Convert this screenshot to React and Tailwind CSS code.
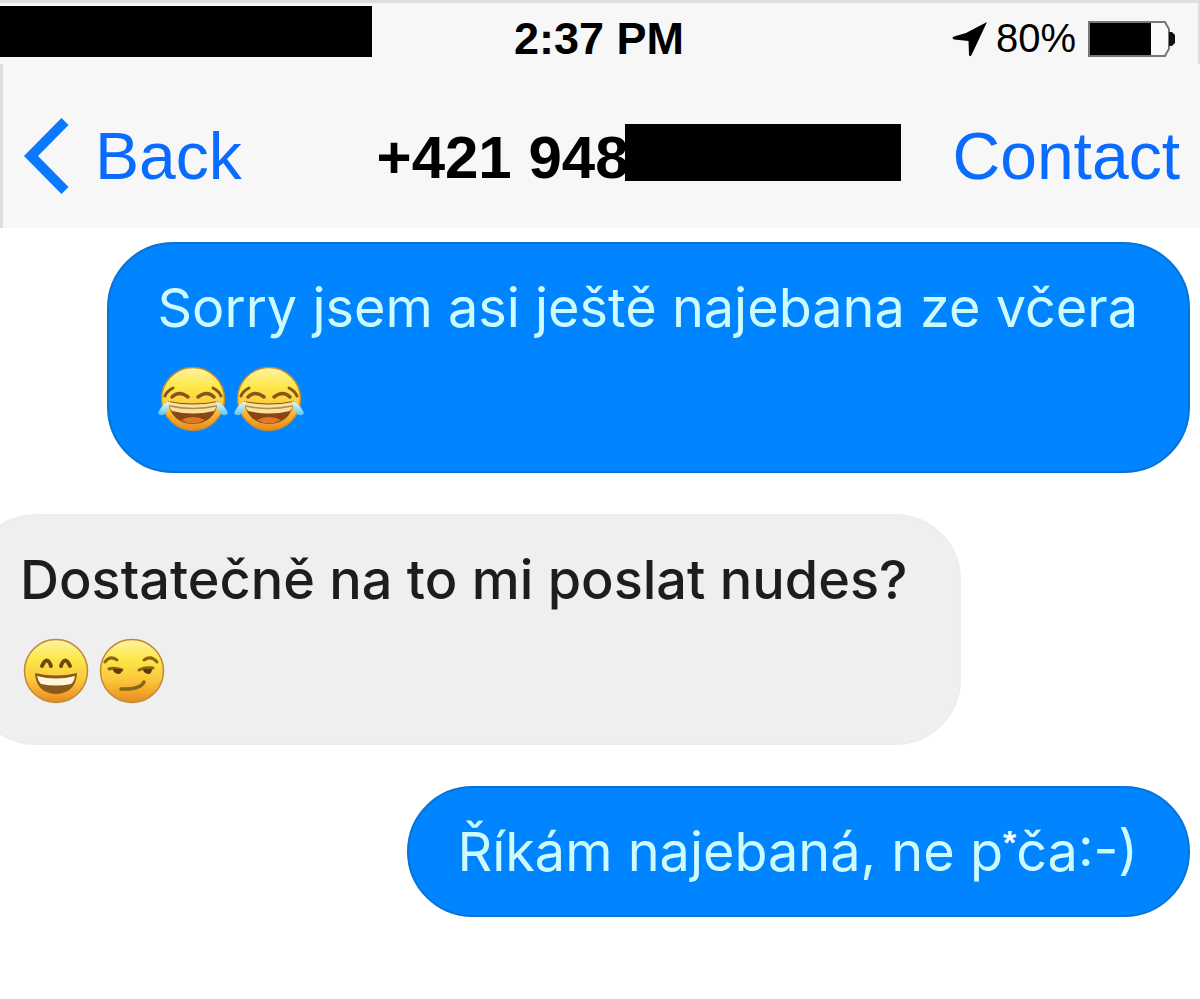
import React from "react";

const Face = ({ label, children }) => (
  <svg viewBox="0 0 76 72" className="h-[72px] w-[76px]" role="img" aria-label={label}>
    <defs>
      <linearGradient id="skin" x1="0" y1="0" x2="0" y2="1">
        <stop offset="0" stopColor="#fdf3a4" />
        <stop offset="0.3" stopColor="#fde84a" />
        <stop offset="0.65" stopColor="#fbc63b" />
        <stop offset="1" stopColor="#e98a1f" />
      </linearGradient>
      <linearGradient id="tear" x1="0" y1="0" x2="0" y2="1">
        <stop offset="0" stopColor="#e9fbff" />
        <stop offset="1" stopColor="#5cc4f7" />
      </linearGradient>
    </defs>
    <circle cx="36" cy="36" r="31.5" fill="url(#skin)" stroke="#bd8a35" strokeWidth="1.5" />
    {children}
  </svg>
);

const Joy = () => (
  <Face label="face with tears of joy">
    <g fill="none" stroke="#8a5418" strokeLinecap="round">
      <path d="M8 33 Q10 28 16 25" strokeWidth="3" />
      <path d="M64 33 Q62 28 56 25" strokeWidth="3" />
      <path d="M15 34 Q22 27 31 34" strokeWidth="3.5" />
      <path d="M41 34 Q50 27 57 34" strokeWidth="3.5" />
    </g>
    <path d="M11 38 Q36 43 61 38 Q58 60 36 61 Q14 60 11 38Z" fill="#8b4512" />
    <path d="M12 39 Q36 44 60 39 Q60 45 57 48 Q36 53 15 48 Q12 45 12 39Z" fill="#f6e3a0" />
    <path d="M13 43 Q36 48 59 43" fill="none" stroke="#b98b43" strokeWidth="1.5" />
    <path d="M24 57 Q36 51 48 57 Q36 64 24 57Z" fill="#dc7a25" />
    <path d="M13 38 Q5 41 1 50 Q3 54 8 51 Q12 46 13 38Z" fill="url(#tear)" />
    <path d="M59 38 Q67 41 71 50 Q69 54 64 51 Q60 46 59 38Z" fill="url(#tear)" />
  </Face>
);

const Grin = () => (
  <Face label="grinning face with smiling eyes">
    <g fill="none" stroke="#6b4a10" strokeWidth="4" strokeLinecap="round">
      <path d="M22 31 Q27 20 31 31" />
      <path d="M41 31 Q45 20 50 31" />
    </g>
    <path d="M15 38 Q36 43 57 38 Q56 58 36 59 Q16 58 15 38Z" fill="#8b5a1b" />
    <path d="M17 41 Q36 46 55 41 Q54 47 51 49 Q36 52 21 49 Q18 46 17 41Z" fill="#fff6da" />
  </Face>
);

const Smirk = () => (
  <Face label="smirking face">
    <g fill="none" stroke="#8a6414" strokeLinecap="round">
      <path d="M9 27 Q14 20 21 25" strokeWidth="3" />
      <path d="M48 25 Q55 20 61 27" strokeWidth="3" />
      <path d="M13 34 Q18 32 26 35" strokeWidth="3" />
      <path d="M43 35 Q49 32 57 33" strokeWidth="3" />
      <path d="M25 54 Q44 55 48 47" strokeWidth="3.5" />
    </g>
    <path d="M17 34 H26 Q26 39 22 39 Q17 38 17 34Z" fill="#5c3c0c" />
    <path d="M47 34 H56 Q56 39 52 39 Q47 38 47 34Z" fill="#5c3c0c" />
  </Face>
);

const bubbleStyles = {
  sent: "self-end mr-[10px] pl-12 pr-[50px] border-2 border-[#0873d6] bg-[#0084ff] text-[#cdfbfc]",
  received: "self-start -ml-[30px] pl-12 pr-[52px] border-2 border-[#ededee] bg-[#efeff0] font-medium text-[#1d1d1f]",
};

const Bubble = ({ from, emojis, children }) => (
  <li className={`rounded-[66px] py-[26px] ${bubbleStyles[from]}`}>
    <p className="text-[54px] leading-[75px]">{children}</p>
    {emojis && <div className="mt-[18px] mb-[10px] flex">{emojis}</div>}
  </li>
);

const StatusBar = () => (
  <div className="grid grid-cols-[1fr_auto_1fr] items-start border-t-[3px] border-r-2 border-t-[#dedede] border-r-[#dedede] pt-[3px]">
    <div className="h-[51px] w-[372px] bg-black" />
    <time className="pt-[7px] text-[45px] leading-[51px] font-bold">2:37 PM</time>
    <div className="flex items-center justify-end gap-3 pt-[7px] pr-[22px]">
      <svg viewBox="0 0 36 36" className="-mr-1 size-9">
        <path d="M35 1 L20 33 Q18 37 17 34 L16.500 20 L2 18.500 Q-1 17 2 15.500 L14 12Z" fill="#000" />
      </svg>
      <span className="text-[40px] leading-[51px]">80%</span>
      <svg viewBox="0 0 88 36" className="h-9 w-[88px]">
        <path d="M1 1 H77 Q79 5 81 8 V28 Q79 31 77 35 H1Z" fill="#fafafa" stroke="#777" strokeWidth="2" />
        <path d="M2 2 H63 V34 H2Z" fill="#000" />
        <path d="M81 11 H84 L87 14 V22 L84 25 H81Z" fill="#111" />
      </svg>
    </div>
  </div>
);

const NavBar = () => (
  <nav className="flex h-[164px] items-center border-l-[3px] border-[#dedede] pt-5 pr-5 pl-5 text-[66px] text-[#0a6cff]">
    <button type="button" className="flex items-center gap-[26px]">
      <svg viewBox="0 0 46 76" className="h-[76px] w-[46px]">
        <path d="M42 3.500 L8 38 L42 72.500" fill="none" stroke="#0b79ff" strokeWidth="10" />
      </svg>
      Back
    </button>
    <h1 className="mr-[52px] ml-auto flex items-center pt-1 text-[60px] font-bold text-black">
      +421 948
      <span className="mb-3 -ml-1 h-[57px] w-[276px] bg-black" />
    </h1>
    <button type="button">Contact</button>
  </nav>
);

const App = () => {
  return (
    <div className="min-h-screen overflow-hidden bg-white font-['Liberation_Sans',Arial,sans-serif]">
      <header className="bg-[#f7f7f7] text-black">
        <StatusBar />
        <NavBar />
      </header>
      <ul className="flex flex-col gap-[41px] pt-[14px] font-[Inter,sans-serif]">
        <Bubble from="sent" emojis={<><Joy /><Joy /></>}>
          Sorry jsem asi ještě najebana ze včera
        </Bubble>
        <Bubble from="received" emojis={<><Grin /><Smirk /></>}>
          Dostatečně na to mi poslat nudes?
        </Bubble>
        <Bubble from="sent">
          Říkám najebaná, ne p
          <sup className="font-['Liberation_Sans',Arial,sans-serif] text-[34px] font-bold text-white">*</sup>
          ča:-)
        </Bubble>
      </ul>
    </div>
  );
};

export default App;
